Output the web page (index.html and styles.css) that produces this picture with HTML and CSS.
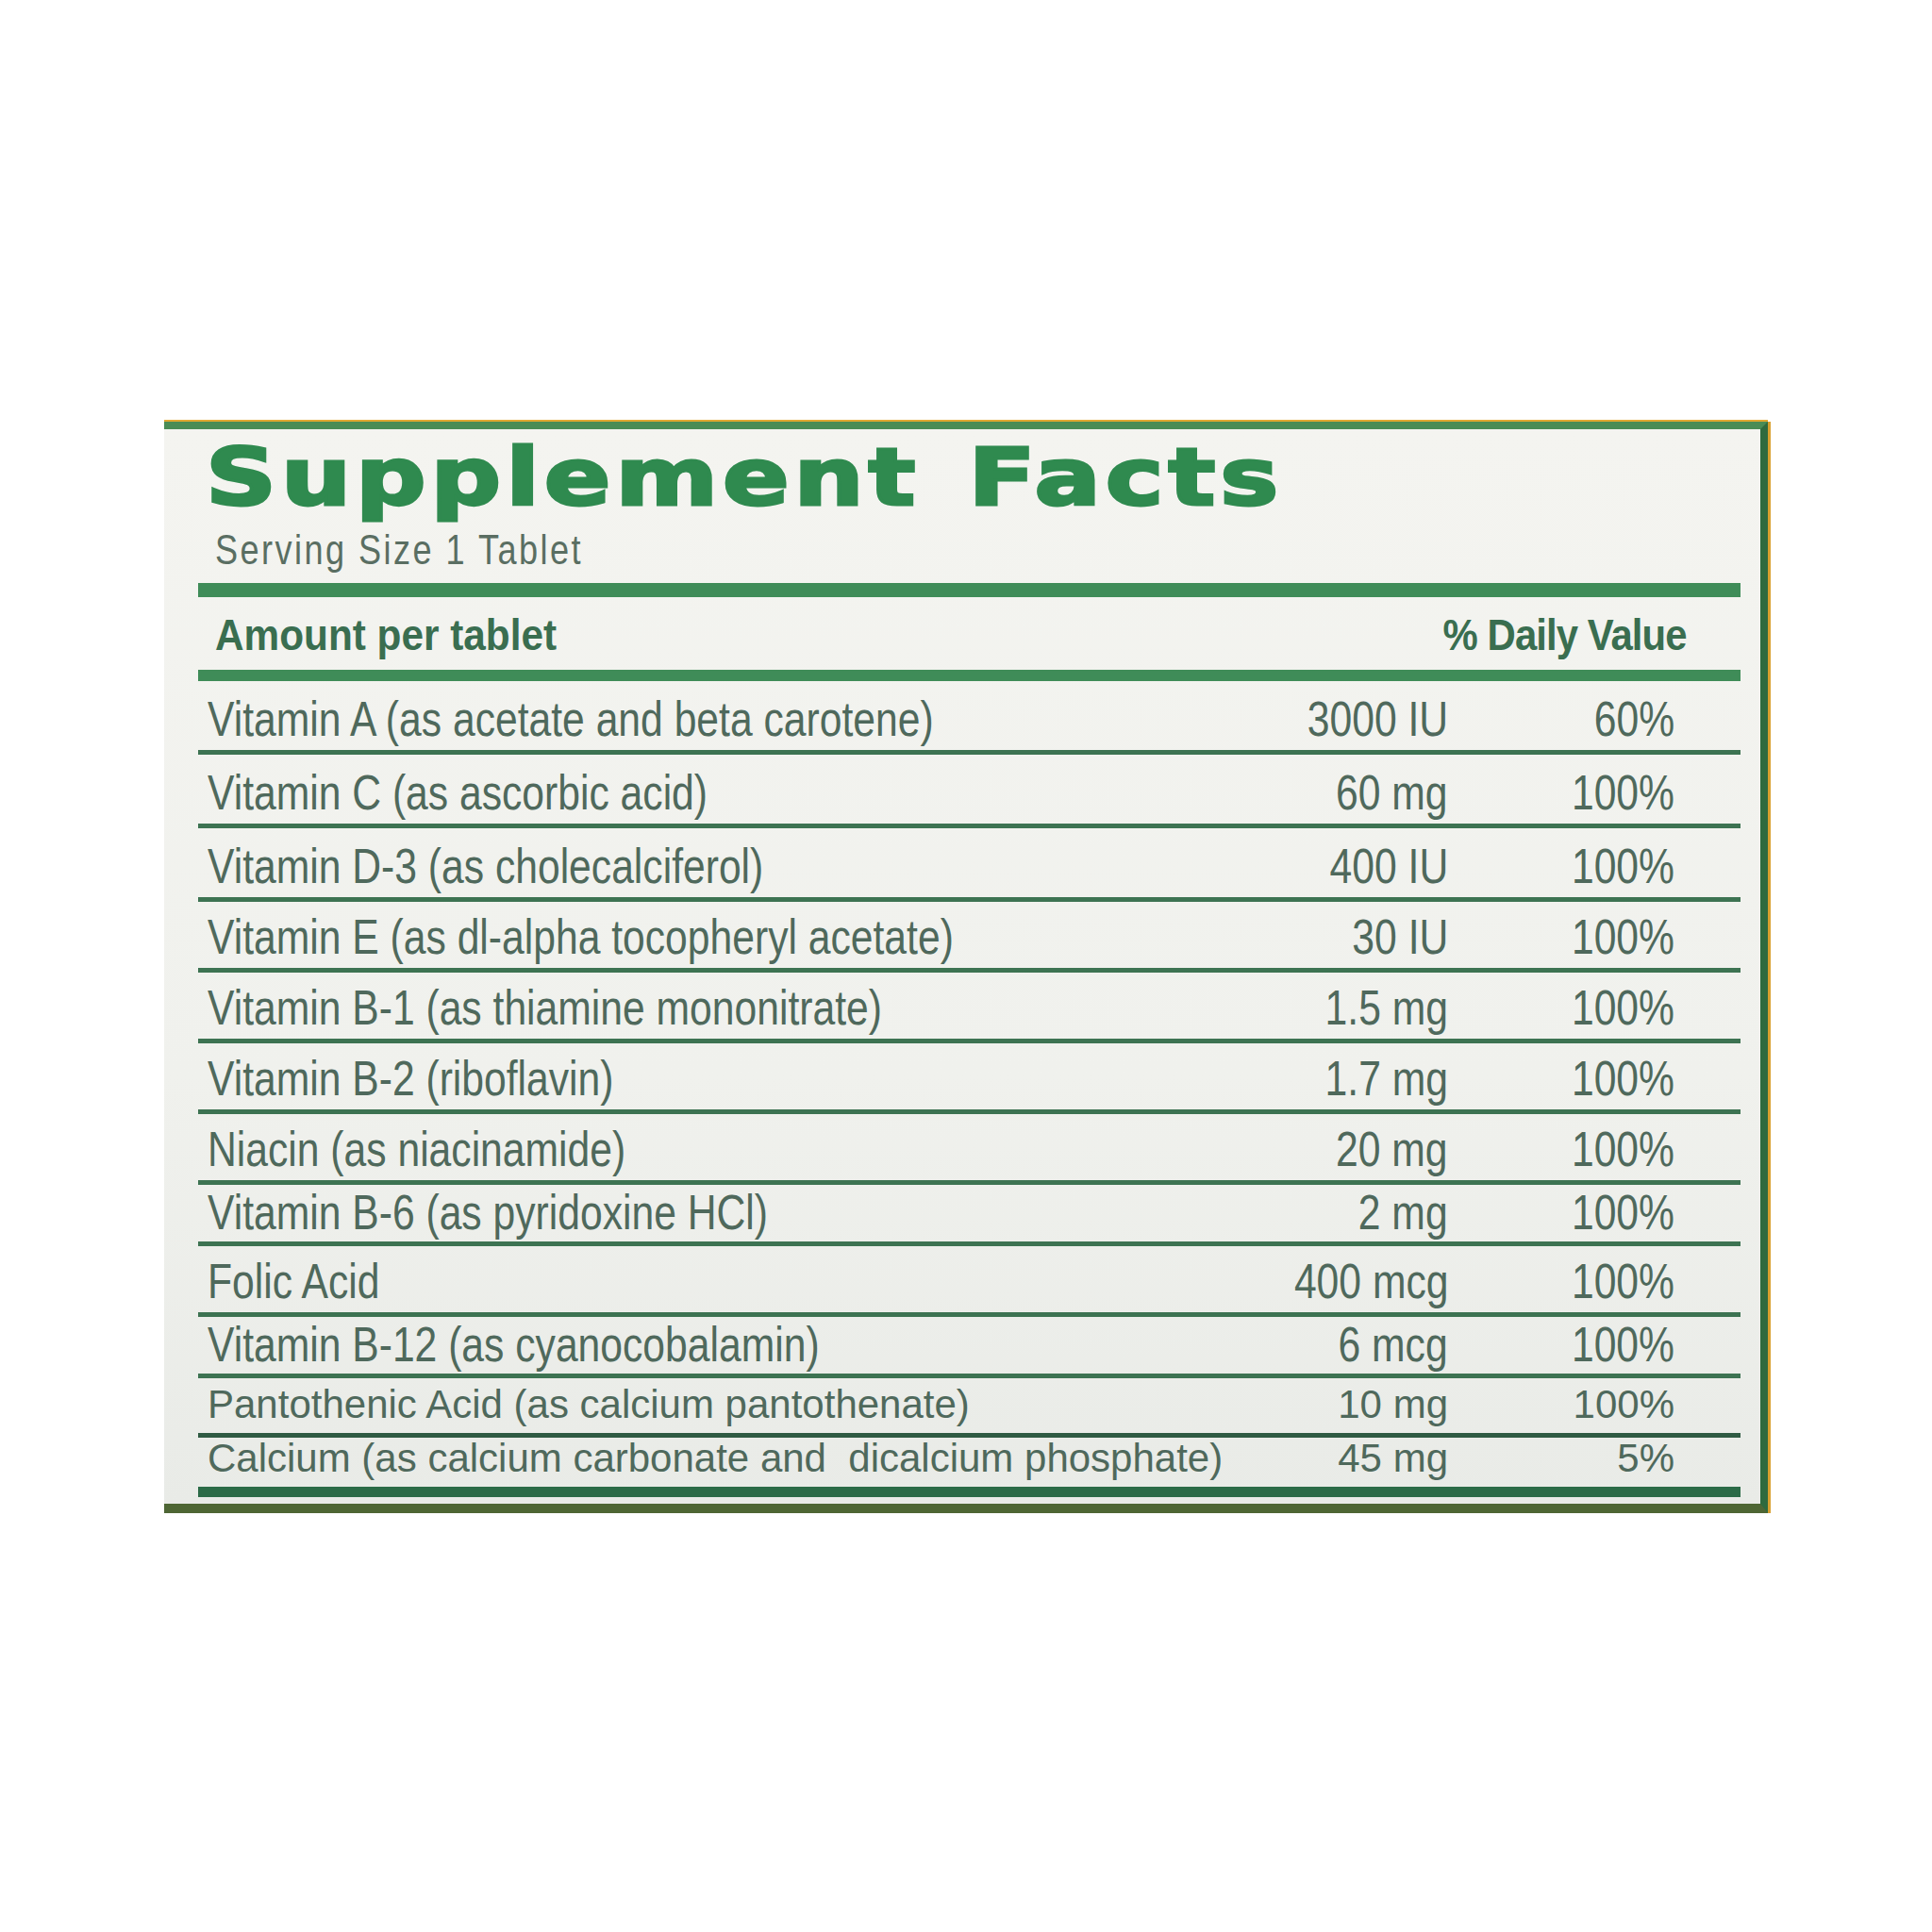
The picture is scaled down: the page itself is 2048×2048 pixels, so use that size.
FILE: index.html
```html
<!DOCTYPE html>
<html lang="en">
<head>
<meta charset="utf-8">
<title>Supplement Facts</title>
<link rel="stylesheet" href="styles.css">
</head>
<body>
<div class="page">
  <section class="panel">
    <h1 class="title"><span class="title-text">Supplement Facts</span></h1>
    <p class="serving"><span class="serving-text">Serving Size 1 Tablet</span></p>
    <div class="rule-thick"></div>
    <div class="head"><span class="amount-head">Amount per tablet</span><span class="dv-head">% Daily Value</span></div>
    <div class="rule-mid"></div>
    <div class="rows">
      <div class="row tall"><span class="name">Vitamin A (as acetate and beta carotene)</span><span class="amt"><span>3000 IU</span></span><span class="dv"><span>60%</span></span></div>
      <div class="row tall"><span class="name">Vitamin C (as ascorbic acid)</span><span class="amt"><span>60 mg</span></span><span class="dv"><span>100%</span></span></div>
      <div class="row tall"><span class="name">Vitamin D-3 (as cholecalciferol)</span><span class="amt"><span>400 IU</span></span><span class="dv"><span>100%</span></span></div>
      <div class="row"><span class="name">Vitamin E (as dl-alpha tocopheryl acetate)</span><span class="amt"><span>30 IU</span></span><span class="dv"><span>100%</span></span></div>
      <div class="row"><span class="name">Vitamin B-1 (as thiamine mononitrate)</span><span class="amt"><span>1.5 mg</span></span><span class="dv"><span>100%</span></span></div>
      <div class="row"><span class="name">Vitamin B-2 (riboflavin)</span><span class="amt"><span>1.7 mg</span></span><span class="dv"><span>100%</span></span></div>
      <div class="row"><span class="name">Niacin (as niacinamide)</span><span class="amt"><span>20 mg</span></span><span class="dv"><span>100%</span></span></div>
      <div class="row short"><span class="name">Vitamin B-6 (as pyridoxine HCl)</span><span class="amt"><span>2 mg</span></span><span class="dv"><span>100%</span></span></div>
      <div class="row"><span class="name">Folic Acid</span><span class="amt"><span>400 mcg</span></span><span class="dv"><span>100%</span></span></div>
      <div class="row short"><span class="name">Vitamin B-12 (as cyanocobalamin)</span><span class="amt"><span>6 mcg</span></span><span class="dv"><span>100%</span></span></div>
      <div class="row small"><span class="name">Pantothenic Acid (as calcium pantothenate)</span><span class="amt"><span>10 mg</span></span><span class="dv"><span>100%</span></span></div>
      <div class="row small last"><span class="name">Calcium (as calcium carbonate and&nbsp; dicalcium phosphate)</span><span class="amt"><span>45 mg</span></span><span class="dv"><span>5%</span></span></div>
    </div>
    <div class="rule-bottom"></div>
  </section>
</div>
</body>
</html>
```

FILE: styles.css
```css
html, body {
  margin: 0;
  padding: 0;
  background: #ffffff;
}

.page {
  padding: 447px 0 0 174px;
}

.panel {
  width: 1700px;
  height: 1157px;
  box-sizing: border-box;
  background: linear-gradient(to bottom, #f4f4f0 0%, #f0f1ed 60%, #e9ebe7 100%);
  border-top: 8px solid #4a8c55;
  border-bottom: 10px solid #4e6634;
  border-right: 8px solid #2f6a3e;
  box-shadow: 0 -2px 0 #e0a832, 3px 0 0 #d9a030;
  padding: 0 21px 0 36px;
  display: flex;
  flex-direction: column;
}

.title {
  margin: 9px 0 0 0;
  padding-left: 8px;
  font-family: "DejaVu Sans", sans-serif;
  font-weight: bold;
  font-size: 84px;
  line-height: 84px;
  color: #2f8a4f;
  white-space: nowrap;
}

.title-text {
  display: inline-block;
  letter-spacing: 4px;
  word-spacing: 8px;
  -webkit-text-stroke: 3px #2f8a4f;
  transform: scaleX(1.24);
  transform-origin: left center;
}

.serving {
  margin: 13px 0 0 0;
  padding-left: 18px;
  font-family: "Liberation Sans", Arial, sans-serif;
  font-size: 44px;
  line-height: 44px;
  color: #5a6e62;
  white-space: nowrap;
}

.serving-text {
  display: inline-block;
  letter-spacing: 3px;
  transform: scaleX(0.82);
  transform-origin: left center;
}

.rule-thick {
  margin-top: 13px;
  height: 15px;
  background: #3f8c58;
}

.head {
  height: 77px;
  box-sizing: border-box;
  padding: 17px 57px 0 18px;
  display: flex;
  justify-content: space-between;
  font-family: "Liberation Sans", Arial, sans-serif;
  font-weight: bold;
  font-size: 46px;
  line-height: 46px;
  color: #3a6e50;
}

.amount-head {
  display: inline-block;
  transform: scaleX(0.92);
  transform-origin: left center;
}

.dv-head {
  display: inline-block;
  letter-spacing: -1px;
  transform: scaleX(0.91);
  transform-origin: right center;
}

.rule-mid {
  height: 12px;
  background: #3f8c58;
}

.rows {
  display: flex;
  flex-direction: column;
}

.row {
  height: 75px;
  box-sizing: border-box;
  display: grid;
  grid-template-columns: minmax(0, 1fr) 262px 240px;
  align-items: end;
  padding: 0 70px 7px 10px;
  border-bottom: 5px solid #3d7352;
  font-family: "Liberation Sans", Arial, sans-serif;
  font-size: 52px;
  line-height: 52px;
  color: #4f695c;
  white-space: nowrap;
}

.row .name {
  display: inline-block;
  transform: scaleX(0.82);
  transform-origin: left bottom;
}

.row .amt,
.row .dv {
  text-align: right;
}

.row .amt span,
.row .dv span {
  display: inline-block;
  transform: scaleX(0.82);
  transform-origin: right bottom;
}

.row.tall {
  height: 78px;
}

.row.short {
  height: 65px;
  padding-bottom: 5px;
}

.row.small {
  height: 63px;
  padding-bottom: 9px;
  font-size: 42px;
  line-height: 42px;
  border-bottom-color: #2f5a42;
}

.row.small .name,
.row.small .amt span,
.row.small .dv span {
  transform: none;
}

.row.last {
  height: 52px;
  border-bottom: none;
}

.rule-bottom {
  height: 11px;
  background: #2b6b47;
}
```
